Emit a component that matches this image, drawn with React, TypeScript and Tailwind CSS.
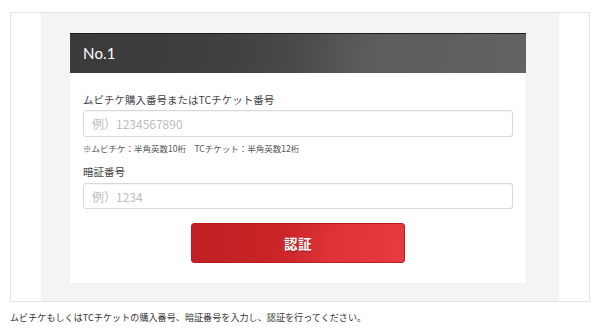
import React from "react";

// チケット認証フォーム

const jp = "font-['Noto_Sans_CJK_JP','Noto_Sans',sans-serif]";

export default function App() {
  return (
    <div className={`w-[600px] h-[329px] bg-white pt-[12px] px-[10px] ${jp}`}>
      {/* Frame */}
      <div className="border border-[#e4e4e4] px-[30px]">
        <div className="bg-[#f4f4f4] pt-[20px] pb-[18px] pl-[29px]">
          <div className="w-[456px] bg-white">
            {/* Header */}
            <div className="h-[40px] flex items-center pl-[13px] border-t border-[#1e1e1e] bg-[linear-gradient(100deg,#3a3a3a_0%,#404040_35%,#4a4a4a_50%,#5c5c5c_65%,#636363_100%)]">
              <span className="text-white text-[15px] font-['Lato','Noto_Sans',sans-serif] tracking-[0.2px]">
                No.1
              </span>
            </div>

            {/* Body */}
            <div className="px-[13px] pt-[20px] pb-[20px]">
              <label className="block text-[10.5px] leading-[14px] text-[#444]">
                ムビチケ購入番号またはTCチケット番号
              </label>
              <input
                type="text"
                placeholder="例）1234567890"
                className="mt-[3px] block w-full h-[27px] px-[8px] text-[12px] border border-[#d8d8d8] rounded-[3px] bg-white outline-none placeholder:text-[#bdbdbd] shadow-[inset_0_1px_1px_rgba(0,0,0,0.04)]"
              />
              <p className="mt-[5px] text-[8.5px] leading-[12px] text-[#555]">
                ※ムビチケ：半角英数10桁　TCチケット：半角英数12桁
              </p>

              <label className="mt-[11px] block text-[10.5px] leading-[14px] text-[#444]">
                暗証番号
              </label>
              <input
                type="text"
                placeholder="例）1234"
                className="mt-[4px] block w-full h-[26px] px-[8px] text-[12px] border border-[#d8d8d8] rounded-[3px] bg-white outline-none placeholder:text-[#bdbdbd] shadow-[inset_0_1px_1px_rgba(0,0,0,0.04)]"
              />

              <div className="mt-[14px] flex justify-center">
                <button className="w-[214px] h-[40px] rounded-[3px] border border-[#b81d21] bg-[linear-gradient(100deg,#c02024_0%,#c92428_40%,#dd3236_65%,#e73b3f_100%)] text-white text-[13.5px] font-bold tracking-[0.5px] [text-shadow:0_1px_1px_rgba(0,0,0,0.25)]">
                  認証
                </button>
              </div>
            </div>
          </div>
        </div>
      </div>

      {/* Note */}
      <p className="mt-[10px] text-[9px] leading-[12px] text-[#333] tracking-[0.1px]">
        ムビチケもしくはTCチケットの購入番号、暗証番号を入力し、認証を行ってください。
      </p>
    </div>
  );
}
